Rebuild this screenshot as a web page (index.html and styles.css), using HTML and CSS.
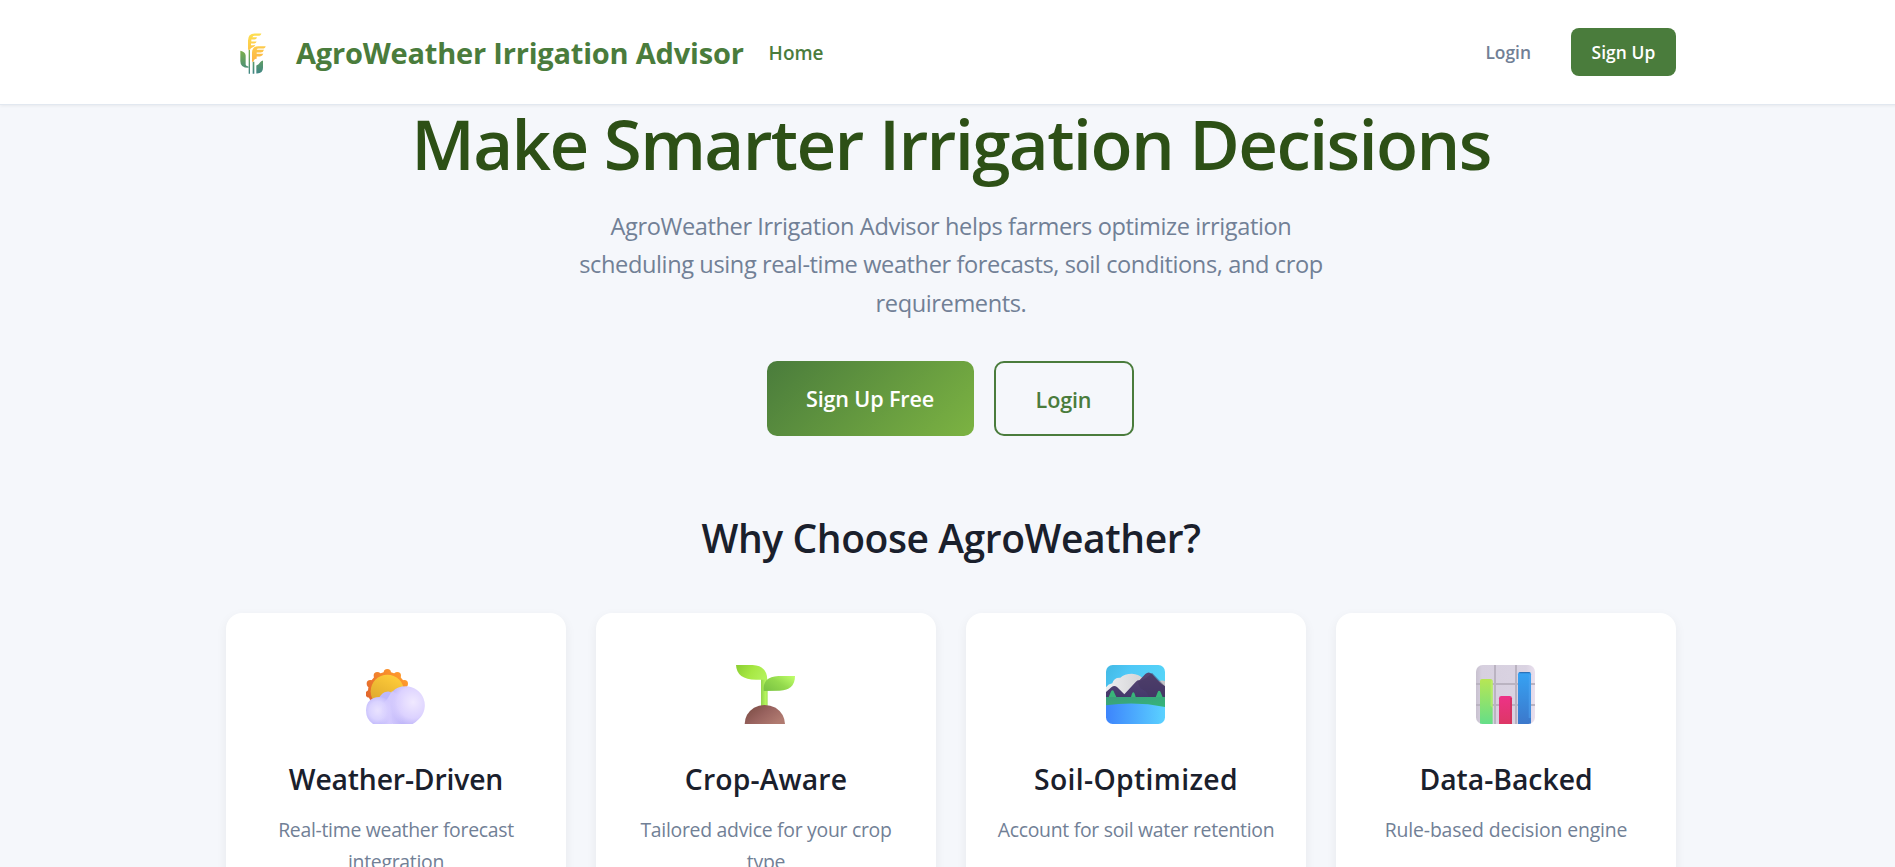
FILE: index.html
```html
<!DOCTYPE html>
<html lang="en">
<head>
    <meta charset="UTF-8">
    <title>AgroWeather Irrigation Advisor</title>
    <link rel="stylesheet" href="styles.css">
</head>
<body>
    <header class="navbar">
        <div class="container nav-inner">
            <svg class="logo" viewBox="60 40 78 122">
                <defs>
                    <linearGradient id="wheat" x1="0" y1="0" x2="0" y2="1">
                        <stop offset="0" stop-color="#fddf50"/>
                        <stop offset="1" stop-color="#fdb345"/>
                    </linearGradient>
                    <linearGradient id="leaf" gradientUnits="userSpaceOnUse" x1="0" y1="92" x2="0" y2="162">
                        <stop offset="0" stop-color="#7ab04c"/>
                        <stop offset="1" stop-color="#3f8586"/>
                    </linearGradient>
                </defs>
                <path fill="url(#leaf)" d="M61 93q15 3 16 14v27q0 5 8 6v4q-24 0-24-20zM86 90h4v72h-4zM98 126h5v36h-5zM129 122v22q0 18-20 17v-24q8-3 11-9 3-4 9-6z"/>
                <path fill="url(#wheat)" d="M84 90V62q0-21 20-21h20q-1 7-10 7h-10q-5 0-7 4h14q-1 7-8 7h-9v6h16q-2 6-8 6h-9v5h6q4 0 7-1-2 7-9 8-5 1-7 7zM96 126v-27q0-20 20-20h21q-1 7-10 7h-11q-5 0-6 4h22q-2 8-10 8h-12v4h20q-2 7-10 8h-10v7q-9 0-10 9z"/>
            </svg>
            <a class="brand" href="#">AgroWeather Irrigation Advisor</a>
            <a class="nav-home" href="#">Home</a>
            <div class="nav-actions">
                <a class="nav-login" href="#">Login</a>
                <a class="nav-signup" href="#">Sign Up</a>
            </div>
        </div>
    </header>

    <main class="container">
        <section class="hero">
            <h1>Make Smarter Irrigation Decisions</h1>
            <p class="hero-text">AgroWeather Irrigation Advisor helps farmers optimize irrigation scheduling using real-time weather forecasts, soil conditions, and crop requirements.</p>
            <div class="hero-buttons">
                <a class="btn btn-primary" href="#">Sign Up Free</a>
                <a class="btn btn-outline" href="#">Login</a>
            </div>
        </section>

        <h2>Why Choose AgroWeather?</h2>
        <section class="features">
            <div class="card card-weather">
                <svg class="card-icon" viewBox="48 45 177 177">
                    <defs>
                        <linearGradient id="sunRays" gradientUnits="userSpaceOnUse" x1="150" y1="70" x2="50" y2="150">
                            <stop offset="0" stop-color="#ff9a2c"/>
                            <stop offset="1" stop-color="#e0632c"/>
                        </linearGradient>
                        <linearGradient id="sunFace" x1=".7" y1="0" x2=".2" y2="1">
                            <stop offset="0" stop-color="#ffcd3a"/>
                            <stop offset="1" stop-color="#d9a32b"/>
                        </linearGradient>
                        <radialGradient id="cloudBig" cx=".68" cy=".42" r=".65">
                            <stop offset="0" stop-color="#f0e9ff"/>
                            <stop offset=".65" stop-color="#dcd2ff"/>
                            <stop offset="1" stop-color="#bdb4f8"/>
                        </radialGradient>
                        <radialGradient id="cloudSmall" cx=".45" cy=".5" r=".55">
                            <stop offset="0" stop-color="#e9e2ff"/>
                            <stop offset=".6" stop-color="#dad3ff"/>
                            <stop offset="1" stop-color="#c1b9fb"/>
                        </radialGradient>
                        <linearGradient id="cloudFade">
                            <stop offset="0" stop-color="#dcd3ff" stop-opacity="0"/>
                            <stop offset=".4" stop-color="#d8ceff"/>
                            <stop offset="1" stop-color="#dcd2ff" stop-opacity="0"/>
                        </linearGradient>
                    </defs>
                    <g fill="url(#sunRays)">
                        <circle cx="112" cy="124" r="58"/>
                        <circle cx="112" cy="68" r="11"/>
                        <circle cx="142" cy="77" r="11"/>
                        <circle cx="163" cy="101" r="11"/>
                        <circle cx="82" cy="77" r="11"/>
                        <circle cx="61" cy="101" r="11"/>
                        <circle cx="58" cy="132" r="11"/>
                    </g>
                    <circle cx="112" cy="124" r="50" fill="url(#sunFace)"/>
                    <path fill="#bdb8fb" d="M88 142q8-15 22-17 9-2 17 4l10 30H92z"/>
                    <path fill="url(#cloudBig)" d="M168 109a57 57 0 0 1 38 99q-7 8-18 14h-60q-14-10-14-54 2-59 54-59z"/>
                    <path fill="url(#cloudSmall)" d="M88 141q26 0 38 28v53H69q-21-13-21-41 1-38 40-40z"/>
                    <path fill="url(#cloudFade)" d="M96 165q20-20 30-42l34 20v79H90z" opacity=".8"/>
                </svg>
                <h3>Weather-Driven</h3>
                <p>Real-time weather forecast integration</p>
            </div>
            <div class="card card-crop">
                <svg class="card-icon" viewBox="48 45 177 177">
                    <defs>
                        <linearGradient id="leafLeft" x1="0" y1=".3" x2="1" y2=".6">
                            <stop offset="0" stop-color="#8ed134"/>
                            <stop offset=".5" stop-color="#a7e844"/>
                            <stop offset="1" stop-color="#b3f25b"/>
                        </linearGradient>
                        <linearGradient id="leafRight" x1="0" y1=".8" x2="1" y2=".1">
                            <stop offset="0" stop-color="#7cc544"/>
                            <stop offset=".5" stop-color="#94da4d"/>
                            <stop offset="1" stop-color="#bdfd68"/>
                        </linearGradient>
                        <linearGradient id="stem">
                            <stop offset="0" stop-color="#93d34d"/>
                            <stop offset=".7" stop-color="#b5f65c"/>
                            <stop offset="1" stop-color="#a3e15a"/>
                        </linearGradient>
                        <linearGradient id="soil" x1="0" y1="0" x2="1" y2=".6">
                            <stop offset="0" stop-color="#76483f"/>
                            <stop offset=".55" stop-color="#99635f"/>
                            <stop offset="1" stop-color="#b07a70"/>
                        </linearGradient>
                    </defs>
                    <path fill="url(#stem)" d="M123 84h16l4 8v76h-20z"/>
                    <path fill="url(#leafLeft)" d="M48 45h50q42 2 44 44h-34q-58 0-60-44z"/>
                    <path fill="url(#leafRight)" d="M131 123q-4-43 44-45h50q0 42-46 44z"/>
                    <path fill="url(#soil)" d="M74 222q1-32 28-49 32-16 65 0 27 18 28 49z"/>
                </svg>
                <h3>Crop-Aware</h3>
                <p>Tailored advice for your crop type</p>
            </div>
            <div class="card card-soil">
                <svg class="card-icon" viewBox="48 45 177 177">
                    <defs>
                        <clipPath id="frame"><rect x="48" y="45" width="177" height="177" rx="20"/></clipPath>
                        <linearGradient id="sky" x1="0" y1="0" x2="1" y2=".3">
                            <stop offset="0" stop-color="#42b9e4"/>
                            <stop offset=".4" stop-color="#4fc8f7"/>
                            <stop offset="1" stop-color="#55d4f8"/>
                        </linearGradient>
                        <linearGradient id="mountain" x1="0" y1="0" x2="0" y2="1">
                            <stop offset="0" stop-color="#594773"/>
                            <stop offset="1" stop-color="#43376b"/>
                        </linearGradient>
                        <linearGradient id="snow">
                            <stop offset="0" stop-color="#eeeef0"/>
                            <stop offset="1" stop-color="#c3c3c7"/>
                        </linearGradient>
                        <linearGradient id="grass" x1="0" y1="0" x2="1" y2="1">
                            <stop offset="0" stop-color="#3b9e7b"/>
                            <stop offset="1" stop-color="#35b77a"/>
                        </linearGradient>
                        <linearGradient id="lake" x1="0" y1=".5" x2="1" y2=".5">
                            <stop offset="0" stop-color="#3d84fc"/>
                            <stop offset="1" stop-color="#5bd2ff"/>
                        </linearGradient>
                    </defs>
                    <g clip-path="url(#frame)">
                        <path fill="url(#sky)" d="M48 45h177v100H48z"/>
                        <path fill="url(#snow)" d="M48 112q7-10 19-12 4-18 24-17 12-12 35-12 20 1 31 13l8 60H48zM204 94q13-5 21-1v30z"/>
                        <path fill="url(#mountain)" d="M48 126l17-15q8-6 16 0l22 22 34-37q4-6 12-6l17-18q10-9 20 0l22 24q8 8 17 13v35H48z"/>
                        <path fill="#43365f" d="M144 94q2 20 17 26 10 3 18 24h46v-35l-39-41q-16 20-42 26z" opacity=".5"/>
                        <path fill="url(#grass)" d="M48 141h177v35H48z"/>
                        <path fill="#39b579" d="M67 121q4 0 6 7l6 13H56l6-14q2-6 5-6zM130 127q4 0 7 14h-14q3-14 7-14zM207 122q4 0 6 7l5 13h-21l5-13q2-7 5-7z"/>
                        <path fill="url(#lake)" d="M48 166q90-13 177 5v51H48z"/>
                    </g>
                </svg>
                <h3>Soil-Optimized</h3>
                <p>Account for soil water retention</p>
            </div>
            <div class="card card-data">
                <svg class="card-icon" viewBox="48 45 177 177">
                    <defs>
                        <linearGradient id="panel">
                            <stop offset="0" stop-color="#c8c1cf"/>
                            <stop offset=".1" stop-color="#d7d0df"/>
                            <stop offset=".85" stop-color="#dad3e2"/>
                            <stop offset="1" stop-color="#eae0ee"/>
                        </linearGradient>
                        <linearGradient id="barGreen" x1="0" y1="0" x2="0" y2="1">
                            <stop offset="0" stop-color="#b7e654"/>
                            <stop offset="1" stop-color="#65de88"/>
                        </linearGradient>
                        <linearGradient id="barPink" x1="0" y1="0" x2="0" y2="1">
                            <stop offset="0" stop-color="#ed3287"/>
                            <stop offset="1" stop-color="#dd3766"/>
                        </linearGradient>
                        <linearGradient id="barBlue" x1="0" y1="0" x2="0" y2="1">
                            <stop offset="0" stop-color="#36a3f4"/>
                            <stop offset="1" stop-color="#3c78cb"/>
                        </linearGradient>
                    </defs>
                    <g clip-path="url(#frame)">
                        <path fill="url(#panel)" d="M48 45h177v177H48z"/>
                        <path fill="none" stroke="#bab3c1" stroke-width="6" d="M48 102h177M48 165h177M105 45v177M168 45v177"/>
                        <path fill="url(#barGreen)" d="M60 222V93q0-6 6-6h25q7 0 7 6v129z"/>
                        <path fill="#c5f16d" d="M92 90q6 0 6 6v80l-6-10z" opacity=".6"/>
                        <path fill="url(#barPink)" d="M117 222v-77q0-7 7-7h25q7 0 7 7v77z"/>
                        <path fill="#c3324f" d="M150 144h6v78h-6z" opacity=".5"/>
                        <path fill="url(#barBlue)" d="M174 222V73q0-7 7-7h25q7 0 7 7v149z"/>
                        <path fill="#2a72ba" d="M176 70q2-4 6-4h23q5 0 7 4z"/>
                        <path fill="#51a7f5" d="M206 74h6v130h-6z" opacity=".5"/>
                    </g>
                </svg>
                <h3>Data-Backed</h3>
                <p>Rule-based decision engine</p>
            </div>
        </section>
    </main>
</body>
</html>
```
FILE: styles.css
```css
* {
    box-sizing: border-box;
}
html {
    overflow: hidden;
}
body {
    margin: 0;
    width: 1902px;
    height: 867px;
    overflow: hidden;
    background: #f5f7fb;
    color: #1a202c;
    font-family: "Segoe UI", "Open Sans", "Noto Sans", sans-serif;
}
a {
    text-decoration: none;
}
.container {
    width: 1450px;
    margin: 0 auto;
}
.navbar {
    height: 105px;
    background: #fff;
    border-bottom: 1px solid #e2e8f0;
    box-shadow: 0 1px 3px rgba(0, 0, 0, 0.06);
}
.nav-inner {
    display: flex;
    align-items: center;
    height: 104px;
}
.logo {
    width: 26px;
    height: 41px;
    margin: 3px 30px 0 14px;
}
.brand {
    color: #4a7c3c;
    font-size: 29px;
    font-weight: 700;
    letter-spacing: -0.2px;
    white-space: nowrap;
}
.nav-home {
    margin-left: 25px;
    padding-top: 2px;
    color: #4a7c3c;
    font-size: 19px;
    font-weight: 600;
}
.nav-actions {
    display: flex;
    align-items: center;
    gap: 40px;
    margin-left: auto;
    font-size: 17.4px;
    font-weight: 600;
}
.nav-login {
    color: #718096;
}
.nav-signup {
    width: 105px;
    height: 48px;
    border-radius: 8px;
    background: #4a7c3c;
    color: #fff;
    letter-spacing: 0.1px;
    line-height: 48px;
    text-align: center;
}
.hero {
    padding-top: 3px;
    text-align: center;
}
h1 {
    margin: 0 0 29px;
    color: #2d5016;
    font-size: 69px;
    font-weight: 600;
    letter-spacing: -1.65px;
    line-height: 70px;
    white-space: nowrap;
}
.hero-text {
    width: 770px;
    margin: 0 auto 39px;
    color: #718096;
    font-size: 23.6px;
    letter-spacing: -0.4px;
    line-height: 38.4px;
}
.hero-buttons {
    display: flex;
    justify-content: center;
    gap: 20px;
    padding-right: 2px;
}
.btn {
    height: 75px;
    border-radius: 10px;
    font-size: 21.6px;
    font-weight: 600;
    letter-spacing: -0.15px;
    line-height: 75px;
}
.btn-primary {
    width: 207px;
    background: linear-gradient(135deg, #4a7c3c, #7cb342);
    color: #fff;
}
.btn-outline {
    width: 140px;
    border: 2px solid #4a7c3c;
    color: #4a7c3c;
    line-height: 74px;
}
h2 {
    margin: 78px 0 51px;
    font-size: 39px;
    font-weight: 600;
    letter-spacing: -0.42px;
    line-height: 48px;
    text-align: center;
}
.features {
    display: grid;
    grid-template-columns: repeat(4, 1fr);
    gap: 30px;
}
.card {
    height: 320px;
    padding: 52px 28px 0;
    border-radius: 16px;
    background: #fff;
    box-shadow: 0 4px 12px rgba(0, 0, 0, 0.06);
    text-align: center;
}
.card-icon {
    display: block;
    width: 59px;
    height: 59px;
    margin: 0 0 35px 112px;
}
h3 {
    margin: 0 0 15px;
    font-size: 28.3px;
    font-weight: 600;
    line-height: 40px;
}
.card-weather h3 {
    letter-spacing: -0.15px;
}
.card-crop h3 {
    letter-spacing: 0.15px;
}
.card-soil h3 {
    letter-spacing: 0.35px;
}
.card p {
    margin: 0;
    color: #718096;
    font-size: 19.4px;
    letter-spacing: -0.28px;
    line-height: 32px;
}
.card-data p {
    letter-spacing: -0.14px;
}
```
